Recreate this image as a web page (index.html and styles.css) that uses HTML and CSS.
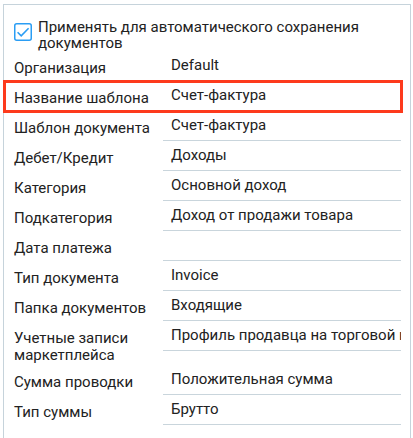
FILE: index.html
```html
<!DOCTYPE html>
<html lang="ru">
<head>
<meta charset="utf-8">
<title>Настройки</title>
<link rel="stylesheet" href="styles.css">
</head>
<body>
<div class="panel">
  <div class="head">
    <span class="check">
      <svg width="18" height="18" viewBox="0 0 18 18">
        <rect x="0.75" y="0.75" width="16.5" height="16.5" rx="2" fill="#fff" stroke="#2a9df4" stroke-width="1.5"/>
        <path d="M3.6 9.2 L7.2 12.8 L14.6 5.2" fill="none" stroke="#2a9df4" stroke-width="1.6"/>
      </svg>
    </span>
    <span class="head-text">Применять для автоматического сохранения документов</span>
  </div>
  <div class="rows">
    <div class="row"><div class="label">Организация</div><div class="value">Default</div></div>
    <div class="row"><div class="label">Название шаблона</div><div class="value">Счет-фактура</div></div>
    <div class="row"><div class="label">Шаблон документа</div><div class="value">Счет-фактура</div></div>
    <div class="row"><div class="label">Дебет/Кредит</div><div class="value">Доходы</div></div>
    <div class="row"><div class="label">Категория</div><div class="value">Основной доход</div></div>
    <div class="row"><div class="label">Подкатегория</div><div class="value">Доход от продажи товара</div></div>
    <div class="row"><div class="label">Дата платежа</div><div class="value"></div></div>
    <div class="row"><div class="label">Тип документа</div><div class="value">Invoice</div></div>
    <div class="row"><div class="label">Папка документов</div><div class="value">Входящие</div></div>
    <div class="row"><div class="label">Учетные записи маркетплейса</div><div class="value">Профиль продавца на торговой площадке</div></div>
    <div class="row"><div class="label">Сумма проводки</div><div class="value">Положительная сумма</div></div>
    <div class="row"><div class="label">Тип суммы</div><div class="value">Брутто</div></div>
  </div>
</div>
<div class="highlight"></div>
</body>
</html>
```
FILE: styles.css
```css
html, body {
  margin: 0;
  padding: 0;
  background: #ffffff;
}
body {
  font-family: Roboto, "Noto Sans", "Liberation Sans", sans-serif;
  font-size: 15px;
  color: #222222;
  position: relative;
  width: 413px;
  height: 438px;
  overflow: hidden;
}
.panel {
  margin: 4px 0 0 3px;
  width: 408px;
  box-sizing: border-box;
  border: 1px solid #c6d3db;
  border-bottom: none;
  padding-bottom: 20px;
}
.head {
  display: flex;
  align-items: flex-start;
  padding: 14px 10px 0 10px;
  line-height: 16px;
}
.check {
  flex: none;
  width: 18px;
  height: 18px;
  margin-top: 4px;
  margin-right: 6px;
  display: block;
}
.check svg {
  display: block;
}
.head-text {
  display: block;
}
.rows {
  display: flex;
  flex-direction: column;
}
.row {
  display: flex;
  align-items: flex-start;
}
.label {
  flex: none;
  width: 159px;
  box-sizing: border-box;
  padding: 9px 10px 1px 10px;
  line-height: 17px;
}
.value {
  flex: none;
  width: 238px;
  height: 30px;
  box-sizing: border-box;
  padding: 5px 0 0 8px;
  line-height: 18px;
  border-bottom: 1px solid #c9d5dc;
  white-space: nowrap;
  overflow: hidden;
}
.highlight {
  position: absolute;
  left: 3px;
  top: 80px;
  width: 400px;
  height: 33px;
  box-sizing: border-box;
  border: 3px solid #fd3a1c;
}
```
